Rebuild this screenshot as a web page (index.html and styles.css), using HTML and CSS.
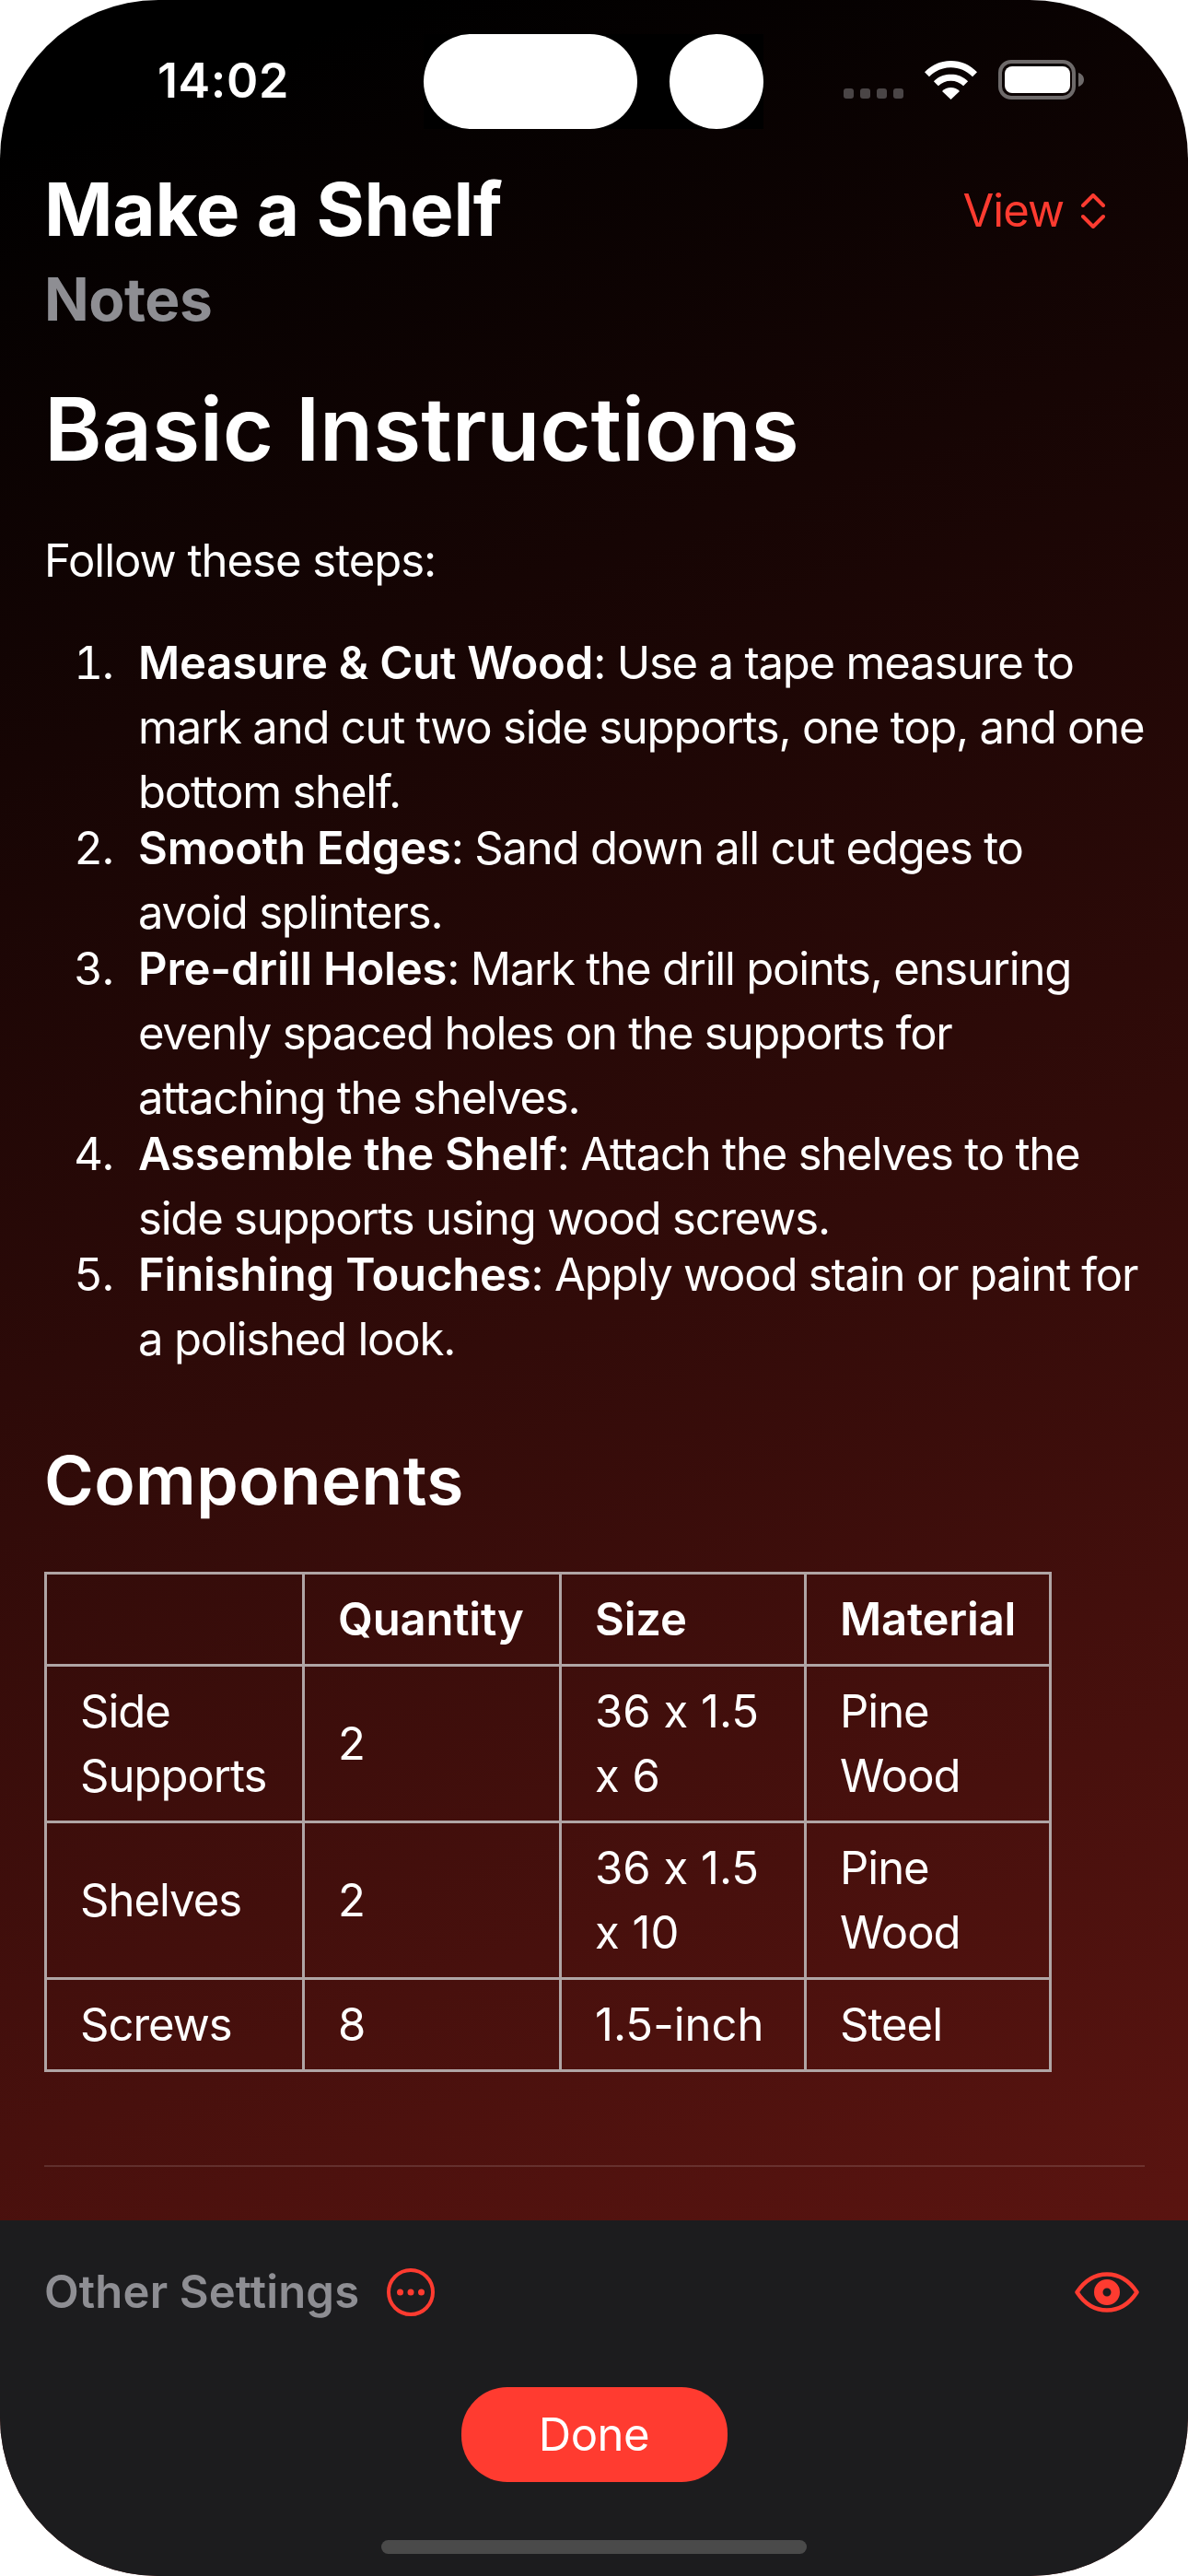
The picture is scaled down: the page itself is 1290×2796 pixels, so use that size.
FILE: index.html
```html
<!DOCTYPE html>
<html lang="en">
<head>
  <meta charset="UTF-8" />
  <meta name="viewport" content="width=device-width, initial-scale=1" />
  <title>Make a Shelf</title>
  <link rel="stylesheet" href="styles.css">
</head>
<body>
  <div class="phone">
    <div class="status-bar">
      <div class="time">14:02</div>
      <div class="island">
        <div class="island-pill"></div>
        <div class="island-dot"></div>
      </div>
      <div class="status-icons">
        <div class="signal"><span></span><span></span><span></span><span></span></div>
        <svg class="wifi" viewBox="0 0 57 42" width="57" height="42">
          <path fill="#fff" d="M28.5 0C17.6 0 7.8 4.2 0 12.3l5 5C11.5 10.8 19.6 7.300 28.500 7.300S45.500 10.800 52 17.300l5-5C49.200 4.200 39.400 0 28.500 0Z"/>
          <path fill="#fff" d="M28.500 14.500c-7.200 0-13.700 2.800-18.600 7.800l5 5c3.600-3.600 8.400-5.600 13.600-5.600s10 2 13.600 5.600l5-5c-4.900-5-11.400-7.800-18.600-7.800Z"/>
          <path fill="#fff" d="M28.500 29c-3.700 0-7 1.400-9.500 3.900L28.500 42 38 32.900C35.500 30.400 32.200 29 28.500 29Z"/>
        </svg>
        <svg class="battery" viewBox="0 0 93 43" width="93" height="43">
          <rect x="2" y="2" width="80" height="39" rx="12" fill="none" stroke="#6e6a6a" stroke-width="4"/>
          <rect x="7" y="7" width="71" height="29" rx="8" fill="#fff"/>
          <path fill="#6e6a6a" d="M87 14c3.500 1 6 4 6 7.500S90.500 28 87 29Z"/>
        </svg>
      </div>
    </div>

    <header class="nav">
      <div class="nav-titles">
        <div class="nav-title">Make a Shelf</div>
        <div class="nav-sub">Notes</div>
      </div>
      <div class="view-btn">
        View
        <svg viewBox="0 0 26 38" width="26" height="38">
          <path fill="none" stroke="#ff3b30" stroke-width="4" stroke-linecap="round" stroke-linejoin="round" d="M2 13 13 2l11 11M2 25l11 11 11-11"/>
        </svg>
      </div>
    </header>

    <main class="content">
      <h1>Basic Instructions</h1>
      <p class="intro">Follow these steps:</p>
      <ol class="steps">
        <li><strong>Measure &amp; Cut Wood</strong>: Use a tape measure to mark and cut two side supports, one top, and one bottom shelf.</li>
        <li><strong>Smooth Edges</strong>: Sand down all cut edges to avoid&nbsp;splinters.</li>
        <li><strong>Pre-drill Holes</strong>: Mark the drill points, ensuring evenly spaced holes on the supports for attaching&nbsp;the shelves.</li>
        <li><strong>Assemble the Shelf</strong>: Attach the shelves to the side supports using wood screws.</li>
        <li><strong>Finishing Touches</strong>: Apply wood stain or paint for a polished look.</li>
      </ol>

      <h2>Components</h2>
      <table class="parts">
        <thead>
          <tr>
            <th class="col-name"></th>
            <th class="col-qty">Quantity</th>
            <th class="col-size">Size</th>
            <th class="col-mat">Material</th>
          </tr>
        </thead>
        <tbody>
          <tr><td>Side Supports</td><td>2</td><td class="size">36 x 1.5 x 6</td><td>Pine Wood</td></tr>
          <tr><td>Shelves</td><td>2</td><td class="size">36 x 1.5 x 10</td><td>Pine Wood</td></tr>
          <tr><td>Screws</td><td>8</td><td class="size">1.5-inch</td><td>Steel</td></tr>
        </tbody>
      </table>
      <hr class="divider">
    </main>

    <footer class="bottom">
      <div class="settings-row">
        <div class="settings-left">
          <span class="settings-label">Other Settings</span>
          <svg viewBox="0 0 52 52" width="52" height="52">
            <circle cx="26" cy="26" r="24" fill="none" stroke="#ff3b30" stroke-width="4"/>
            <circle cx="14.500" cy="26" r="3.500" fill="#ff3b30"/>
            <circle cx="26" cy="26" r="3.500" fill="#ff3b30"/>
            <circle cx="37.500" cy="26" r="3.500" fill="#ff3b30"/>
          </svg>
        </div>
        <svg viewBox="0 0 70 44" width="70" height="44">
          <path fill="none" stroke="#ff3b30" stroke-width="4.500" stroke-linejoin="round" d="M2.500 22C11 9 22 2.500 35 2.500S59 9 67.500 22C59 35 48 41.500 35 41.500S11 35 2.500 22Z"/>
          <path fill="#ff3b30" fill-rule="evenodd" d="M35 8a14 14 0 1 0 0 28 14 14 0 0 0 0-28Zm0 9.500a4.500 4.500 0 1 1 0 9 4.500 4.500 0 0 1 0-9Z"/>
        </svg>
      </div>
      <button class="done-btn">Done</button>
      <div class="home-bar"></div>
    </footer>
  </div>
</body>
</html>
```

FILE: styles.css
```css
* {
  box-sizing: border-box;
}

html, body {
  margin: 0;
  padding: 0;
  background: #fff;
}

body {
  font-family: Inter, 'Noto Sans', sans-serif;
  font-variant-ligatures: no-contextual;
  color: #fff;
}

.phone {
  width: 1290px;
  height: 2796px;
  border-radius: 172px;
  overflow: hidden;
  display: flex;
  flex-direction: column;
  background: linear-gradient(160deg, #000 5%, #5e1511 92%);
}

/* Status bar */
.status-bar {
  height: 177px;
  flex: none;
  padding-top: 37px;
  display: flex;
  align-items: flex-start;
}
.time {
  width: 460px;
  padding-left: 171px;
  padding-top: 24px;
  font-size: 52px;
  line-height: 54px;
  font-weight: 600;
  letter-spacing: 0.6px;
}
.island {
  width: 369px;
  height: 103px;
  background: #000;
  display: flex;
  justify-content: space-between;
}
.island-pill {
  width: 232px;
  height: 103px;
  background: #fff;
  border-radius: 52px;
}
.island-dot {
  width: 102px;
  height: 103px;
  background: #fff;
  border-radius: 50%;
}
.status-icons {
  margin-left: 87px;
  margin-top: 28px;
  display: flex;
  align-items: flex-end;
}
.signal {
  display: flex;
  gap: 7px;
  margin-bottom: 1px;
  margin-right: 23px;
}
.signal span {
  width: 11px;
  height: 11px;
  border-radius: 3px;
  background: #4a4546;
}
.wifi {
  margin-right: 23px;
}

/* Nav */
.nav {
  flex: none;
  padding: 0 90px 0 48px;
  display: flex;
  justify-content: space-between;
  align-items: flex-start;
}
.nav-title {
  font-size: 80px;
  line-height: 100px;
  font-weight: 700;
  letter-spacing: -0.3px;
}
.nav-sub {
  font-size: 64px;
  line-height: 96px;
  font-weight: 700;
  letter-spacing: -0.5px;
  color: #8e8e93;
}
.view-btn {
  display: flex;
  align-items: center;
  gap: 19px;
  padding-top: 22px;
  font-size: 49px;
  line-height: 60px;
  letter-spacing: -1px;
  color: #ff3b30;
}

/* Content */
.content {
  flex: 1;
  padding: 28px 47px 0 48px;
}
h1 {
  margin: 0;
  font-size: 95px;
  line-height: 130px;
  font-weight: 600;
  letter-spacing: -0.1px;
}
.intro {
  margin: 43px 0 0;
  font-size: 49px;
  line-height: 70px;
  letter-spacing: -1px;
}
.steps {
  margin: 41px -8px 0 0;
  padding: 0 0 0 102px;
  font-size: 49px;
  line-height: 70px;
  letter-spacing: -1.2px;
}
.steps li {
  margin-bottom: -9px;
}
.steps li::marker {
  content: counter(list-item) ". \00a0\200a";
}
.steps strong {
  font-weight: 600;
  letter-spacing: -0.2px;
}
h2 {
  margin: 77px 0 0;
  font-size: 73px;
  line-height: 100px;
  font-weight: 600;
  letter-spacing: 0.4px;
}

/* Table */
.parts {
  margin-top: 49px;
  width: 1091px;
  table-layout: fixed;
  border-collapse: collapse;
  font-size: 49px;
  line-height: 70px;
  letter-spacing: -1px;
}
.parts th, .parts td {
  border: 3px solid #b0a5a5;
  padding: 13.5px 36px;
  text-align: left;
  vertical-align: middle;
}
.parts th {
  font-weight: 600;
  letter-spacing: -0.2px;
}
.parts .size {
  letter-spacing: 0;
}
.col-name { width: 280px; }
.col-qty { width: 279px; }
.col-size { width: 266px; }
.col-mat { width: 266px; }

.divider {
  margin: 101px 0 0;
  border: 0;
  height: 2px;
  background: rgba(255, 255, 255, 0.13);
}

/* Footer */
.bottom {
  flex: none;
  height: 386px;
  background: #1c1c1e;
  display: flex;
  flex-direction: column;
  align-items: center;
}
.settings-row {
  width: 100%;
  padding: 52px 53px 0 48px;
  display: flex;
  justify-content: space-between;
  align-items: center;
}
.settings-left {
  display: flex;
  align-items: center;
  gap: 30px;
}
.settings-label {
  font-size: 49px;
  line-height: 52px;
  font-weight: 600;
  letter-spacing: 0.15px;
  color: #8e8e93;
}
.done-btn {
  margin-top: 77px;
  width: 289px;
  height: 103px;
  border: none;
  border-radius: 50px;
  background: #ff3b30;
  color: #fff;
  font-family: inherit;
  font-size: 49px;
  letter-spacing: -0.5px;
}
.home-bar {
  margin-top: 63px;
  width: 462px;
  height: 15px;
  border-radius: 8px;
  background: #4a4a4a;
}
```
